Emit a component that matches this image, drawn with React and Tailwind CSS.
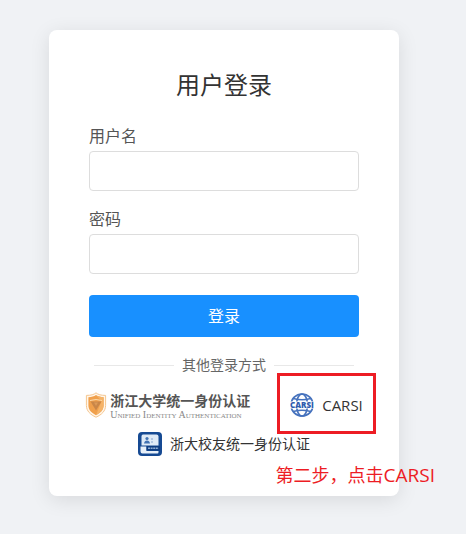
function ShieldLogo() {
  return (
    <svg viewBox="0 0 22 26" className="w-[22px] h-[26px] shrink-0" aria-hidden="true">
      <path d="M11 .8C13 2.600 16 3.400 20.600 3.400V13.500C20.600 19 16.500 22.800 11 25.200 5.500 22.800 1.400 19 1.400 13.500V3.400C6 3.400 9 2.600 11 .8Z" fill="#fff6ea" stroke="#f5c68f" strokeWidth="1" />
      <path d="M11 3C13 4.400 15.500 5 18.600 5.200V13.500C18.600 17.800 15.400 21 11 23.200 6.600 21 3.400 17.800 3.400 13.500V5.200C6.500 5 9 4.400 11 3Z" fill="#f0a04c" />
      <path d="M11 3C13 4.400 15.500 5 18.600 5.200V13.500C18.600 17.800 15.400 21 11 23.200L16.500 9Z" fill="#f5b368" />
      <path d="M5.500 9.500H16.500L11 18.500Z" fill="#c98648" />
      <path d="M9 10.500H13L11 14Z" fill="#dc9a58" />
      <path d="M5 8.500 11 7.500 17 8.500" fill="none" stroke="#fbd9a8" strokeWidth="1" />
    </svg>
  )
}

function CarsiLogo() {
  return (
    <svg viewBox="0 0 24 24" className="w-6 h-6 shrink-0" aria-hidden="true">
      <g fill="none" stroke="#4672bd" strokeWidth="1.700">
        <circle cx="12" cy="12" r="11" />
        <ellipse cx="12" cy="12" rx="5.500" ry="11" />
        <path d="M3.500 5.500Q12 8 20.500 5.500M3.500 18.500Q12 16 20.500 18.500" />
      </g>
      <rect x="0" y="8.500" width="24" height="7" fill="#fff" />
      <text x="12" y="15" textAnchor="middle" fontFamily="Open Sans, sans-serif" fontSize="8" fontWeight="800" fill="#2f5cae">CARSI</text>
    </svg>
  )
}

function AlumniLogo() {
  return (
    <svg viewBox="0 0 24 24" className="w-6 h-6 shrink-0" aria-hidden="true">
      <rect width="24" height="24" rx="4" fill="#164a93" />
      <path d="M5 2.500H18.500Q20.500 2.500 20.500 4.500V13.500H3.500V4.500Q3.500 2.500 5 2.500Z" fill="#dfeaf6" />
      <circle cx="9" cy="6.500" r="1.600" fill="#4272b2" />
      <path d="M6 11.500Q6.500 8.500 9 8.500T12 11.500Z" fill="#4272b2" />
      <path d="M14 6V8M14 9V11" stroke="#86a6d0" />
      <path d="M2.500 14.500H8.500V19H20.500V20Q20.500 21.500 19.500 21.500H4.500Q2.500 21.500 2.500 19.500Z" fill="#e8f0f9" />
      <rect x="8.500" y="14" width="13.500" height="4.500" fill="#0d3c81" />
      <path d="M10 16.200H20.500" stroke="#8fadd3" strokeWidth="1.500" strokeDasharray="2 .6" />
    </svg>
  )
}

function Field({ id, label, type }) {
  return (
    <div className="mb-4">
      <label htmlFor={id} className="block mb-[3px] text-base leading-6 text-[#555]">{label}</label>
      <input id={id} type={type} className="block w-full h-10 px-3 bg-white border border-[#ddd] rounded outline-none focus:border-[#1890ff]" />
    </div>
  )
}

export default function App() {
  return (
    <div className="min-h-screen bg-[#f0f2f5] pt-[30px] pb-[38px] pr-[18px] flex items-start justify-center font-['Open_Sans','Noto_Sans_CJK_SC',sans-serif]">
      <main className="relative w-full max-w-[350px] bg-white rounded-lg p-10 shadow-[0_4px_20px_rgba(0,0,0,0.1)]">
        <h1 className="mb-6 text-2xl leading-[30px] text-center text-[#333]">用户登录</h1>
        <form onSubmit={(e) => e.preventDefault()}>
          <Field id="username" label="用户名" type="text" />
          <Field id="password" label="密码" type="password" />
          <button type="submit" className="block w-full h-[42px] mt-[21px] rounded bg-[#1890ff] text-base text-white cursor-pointer">登录</button>
        </form>

        <div className="flex items-center gap-2 mx-[5px] mt-[18px] text-sm leading-5 text-[#666]">
          <span className="flex-1 h-px bg-[#e8e8e8]" />
          其他登录方式
          <span className="flex-1 h-px bg-[#e8e8e8]" />
        </div>

        <div className="flex flex-col items-center gap-[15px] -mx-2 mt-[18px] text-sm leading-5 text-[#333]">
          <div className="flex items-center gap-10 h-6">
            <a href="#zju" className="flex items-center gap-[3px] whitespace-nowrap">
              <ShieldLogo />
              <span className="flex flex-col pt-1">
                <span className="text-sm leading-4 font-bold text-[#555]">浙江大学统一身份认证</span>
                <span className="text-[10px] leading-3 text-[#888] font-['Liberation_Serif',serif] [font-variant:small-caps]">Unified Identity Authentication</span>
              </span>
            </a>
            <a href="#carsi" className="relative flex items-center gap-2">
              <CarsiLogo />
              <span className="text-[15px]">CARSI</span>
              <span className="absolute -inset-x-[13px] -top-5 -bottom-[17px] border-3 border-[#ed1c24] pointer-events-none" />
            </a>
          </div>
          <a href="#alumni" className="flex items-center gap-2">
            <AlumniLogo />
            浙大校友统一身份认证
          </a>
        </div>

        <p className="absolute -right-9 bottom-[9px] text-lg leading-6 text-[#ed1c24] whitespace-nowrap">第二步，点击<span className="text-[19px]">CARSI</span></p>
      </main>
    </div>
  )
}
